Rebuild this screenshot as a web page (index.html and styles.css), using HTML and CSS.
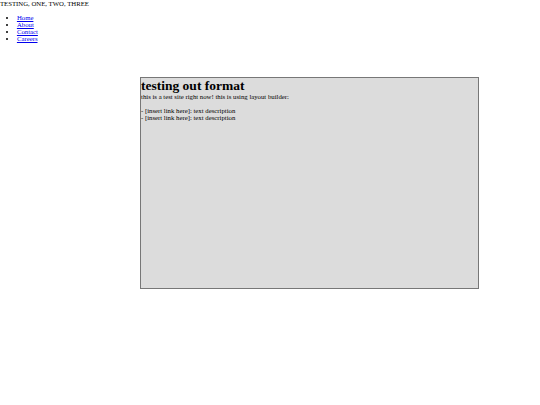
FILE: index.html
```html
<!DOCTYPE html>
<html>
<head>
<meta charset="utf-8">
<title>testing out format</title>
<link rel="stylesheet" href="styles.css">
</head>
<body>
<div class="site-name">TESTING, ONE, TWO, THREE</div>
<ul class="nav">
  <li><a href="#">Home</a></li>
  <li><a href="#">About</a></li>
  <li><a href="#">Contact</a></li>
  <li><a href="#">Careers</a></li>
</ul>
<section class="panel">
  <h1 class="panel-title">testing out format</h1>
  <p class="panel-text">this is a test site right now! this is using layout builder:<br><br>- [insert link here]: text description<br>- [insert link here]: text description</p>
</section>
</body>
</html>
```
FILE: styles.css
```css
html, body {
  margin: 0;
  padding: 0;
  background: #ffffff;
}
body {
  font-family: "Liberation Serif", "Times New Roman", serif;
  font-size: 6.75px;
  color: #000;
}
.site-name {
  margin: 0;
}
.nav {
  margin: 6.75px 0;
  padding-left: 16.9px;
}
.nav a {
  color: #0000ee;
}
.panel {
  margin: 35px 0 0 140px;
  width: 337px;
  height: 210px;
  background: #dcdcdc;
  border: 1px solid #777777;
}
.panel-title {
  margin: 0;
  font-size: 13.5px;
  font-weight: bold;
  line-height: 1.15;
}
.panel-text {
  margin: 0;
}
```
